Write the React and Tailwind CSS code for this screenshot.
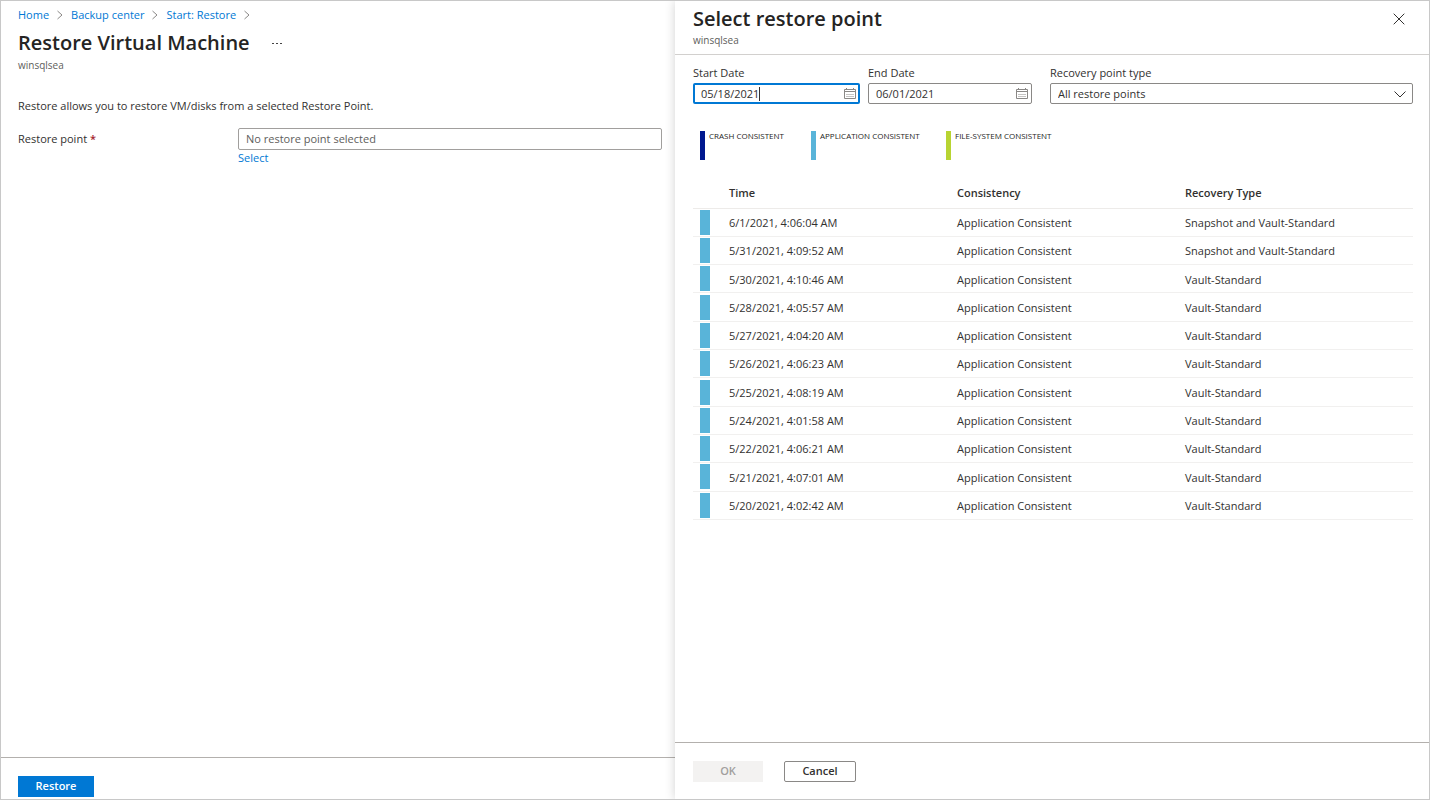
import { useState } from "react";

const LINKS = ["Home", "Backup center", "Start: Restore"];

const LEGEND = [
  { label: "CRASH CONSISTENT", bar: "bg-[#00188f]" },
  { label: "APPLICATION CONSISTENT", bar: "bg-[#59b4d9]" },
  { label: "FILE-SYSTEM CONSISTENT", bar: "bg-[#b8d432]" },
];

const ROWS = [
  { time: "6/1/2021, 4:06:04 AM", type: "Snapshot and Vault-Standard" },
  { time: "5/31/2021, 4:09:52 AM", type: "Snapshot and Vault-Standard" },
  { time: "5/30/2021, 4:10:46 AM", type: "Vault-Standard" },
  { time: "5/28/2021, 4:05:57 AM", type: "Vault-Standard" },
  { time: "5/27/2021, 4:04:20 AM", type: "Vault-Standard" },
  { time: "5/26/2021, 4:06:23 AM", type: "Vault-Standard" },
  { time: "5/25/2021, 4:08:19 AM", type: "Vault-Standard" },
  { time: "5/24/2021, 4:01:58 AM", type: "Vault-Standard" },
  { time: "5/22/2021, 4:06:21 AM", type: "Vault-Standard" },
  { time: "5/21/2021, 4:07:01 AM", type: "Vault-Standard" },
  { time: "5/20/2021, 4:02:42 AM", type: "Vault-Standard" },
];

function Chevron() {
  return (
    <svg viewBox="0 0 6 10" className="h-[10px] w-[6px]" fill="none" stroke="#8a8886" strokeWidth="1" aria-hidden="true">
      <path d="M0.5 1 5 5 0.5 9" />
    </svg>
  );
}

function CalendarIcon() {
  return (
    <svg viewBox="0 0 12 12" className="pointer-events-none absolute top-[5px] right-1 h-3 w-3" fill="none" stroke="#8a8886" strokeWidth="1" aria-hidden="true">
      <path d="M0.5 1.5h11v9h-11zM0.5 3.5h11M2.5 0v2M9.5 0v2" />
      <path d="M2.5 6.5h7M2.5 8.5h7" strokeDasharray="1 1" />
    </svg>
  );
}

function DateField({ id, label, value, onChange, active }) {
  return (
    <div className={active ? "w-[167px]" : "w-[164px]"}>
      <label htmlFor={id} className="block h-[18px] leading-4">
        {label}
      </label>
      <div className="relative">
        <input
          id={id}
          type="text"
          value={value}
          onChange={(e) => onChange(e.target.value)}
          className={`block h-[21px] w-full rounded-[2px] pr-6 caret-transparent outline-none ${
            active ? "border-2 border-[#0078d4] pl-[6px]" : "border border-[#8a8886] pl-[7px]"
          }`}
        />
        {active && <span className="absolute top-1 left-[66px] h-[14px] w-px bg-[#323130]" />}
        <CalendarIcon />
      </div>
    </div>
  );
}

function RestorePane() {
  return (
    <main className="flex min-w-0 flex-1 flex-col">
      <div className="flex-1 pr-[13px] pl-[17px]">
        <nav aria-label="Breadcrumb" className="flex h-7 items-center gap-2 text-[#0078d4]">
          {LINKS.map((link) => (
            <span key={link} className="flex items-center gap-2">
              <a href="#" className="hover:underline">
                {link}
              </a>
              <Chevron />
            </span>
          ))}
        </nav>
        <div className="flex h-7 items-center gap-[22px]">
          <h1 className="text-[20px] leading-7 font-semibold text-[#252423]">Restore Virtual Machine</h1>
          <button type="button" aria-label="More actions" className="flex gap-[2px]">
            <span className="h-px w-[2px] bg-[#444]" />
            <span className="h-px w-[2px] bg-[#444]" />
            <span className="h-px w-[2px] bg-[#444]" />
          </button>
        </div>
        <p className="text-[10px] leading-4 text-[#605e5c]">winsqlsea</p>

        <p className="mt-[25px] leading-4">Restore allows you to restore VM/disks from a selected Restore Point.</p>

        <div className="mt-[14px] flex">
          <label htmlFor="restore-point" className="w-[220px] shrink-0 leading-[22px]">
            Restore point <span className="font-semibold text-[#a4262c]">*</span>
          </label>
          <div className="flex-1">
            <input
              id="restore-point"
              type="text"
              readOnly
              value="No restore point selected"
              className="block h-[22px] w-full rounded-[2px] border border-[#a19f9d] px-[7px] pb-px text-[#605e5c] outline-none"
            />
            <a href="#" className="block leading-4 text-[#0078d4] hover:underline">
              Select
            </a>
          </div>
        </div>
      </div>

      <footer className="h-[42px] border-t border-[#b3b0ad] pt-[18px] pl-[17px]">
        <button type="button" className="block h-[21px] w-[76px] bg-[#0078d4] font-semibold text-white">
          Restore
        </button>
      </footer>
    </main>
  );
}

function RestorePointPanel() {
  const [start, setStart] = useState("05/18/2021");
  const [end, setEnd] = useState("06/01/2021");

  return (
    <aside className="flex w-[754px] shrink-0 flex-col bg-white shadow-[0_0_10px_rgba(0,0,0,0.18)]">
      <header className="flex h-[54px] items-start justify-between border-b border-[#d2d0ce] pr-6 pl-[18px]">
        <div>
          <h2 className="pt-1 text-[20px] leading-7 font-semibold text-[#252423]">Select restore point</h2>
          <p className="text-[10px] leading-[14px] text-[#605e5c]">winsqlsea</p>
        </div>
        <button type="button" aria-label="Close" className="pt-3">
          <svg viewBox="0 0 12 12" className="h-3 w-3" fill="none" stroke="#323130" strokeWidth="1">
            <path d="M0.7 0.7 11.3 11.3M11.3 0.7 0.7 11.3" />
          </svg>
        </button>
      </header>

      <div className="flex-1 pt-[10px] pr-4 pl-[18px]">
        <div className="flex gap-[18px]">
          <div className="flex gap-2">
            <DateField id="start-date" label="Start Date" value={start} onChange={setStart} active />
            <DateField id="end-date" label="End Date" value={end} onChange={setEnd} />
          </div>
          <div className="flex-1">
            <label htmlFor="point-type" className="block h-[18px] leading-4">
              Recovery point type
            </label>
            <div className="relative">
              <select
                id="point-type"
                className="block h-[21px] w-full appearance-none rounded-[2px] border border-[#8a8886] bg-white pt-px pl-[7px] outline-none"
              >
                <option>All restore points</option>
                <option>Crash Consistent</option>
                <option>Application Consistent</option>
                <option>File-system Consistent</option>
              </select>
              <svg
                viewBox="0 0 12 7"
                className="pointer-events-none absolute top-2 right-[7px] h-[7px] w-3"
                fill="none"
                stroke="#323130"
                strokeWidth="1"
                aria-hidden="true"
              >
                <path d="M0.5 0.5 6 6 11.5 0.5" />
              </svg>
            </div>
          </div>
        </div>

        <ul className="mt-[27px] grid grid-cols-[111px_135px_auto] pl-[7px] text-[8px] leading-[10px] font-medium text-[#252423]">
          {LEGEND.map((item) => (
            <li key={item.label} className="flex gap-1 whitespace-nowrap">
              <span className={`h-[29px] w-[5px] ${item.bar}`} />
              {item.label}
            </li>
          ))}
        </ul>

        <table className="mt-4 h-[344px] w-full table-fixed border-collapse text-left">
          <thead>
            <tr className="h-8 border-b border-[#edebe9]">
              <td className="w-9" />
              <th className="pt-[2px] font-semibold">Time</th>
              <th className="pt-[2px] font-semibold">Consistency</th>
              <th className="pt-[2px] font-semibold">Recovery Type</th>
            </tr>
          </thead>
          <tbody>
            {ROWS.map((row) => (
              <tr key={row.time} className="h-7 border-b border-[#f1f0ef]">
                <td className="pl-[7px]">
                  <div className="h-[25px] w-[10px] bg-[#59b4d9]" />
                </td>
                <td className="pt-[2px]">{row.time}</td>
                <td className="pt-[2px]">Application Consistent</td>
                <td className="pt-[2px]">{row.type}</td>
              </tr>
            ))}
          </tbody>
        </table>
      </div>

      <footer className="flex h-[57px] gap-[21px] border-t border-[#b3b0ad] pt-[18px] pl-[18px]">
        <button type="button" disabled className="h-[21px] w-[70px] bg-[#f3f2f1] font-semibold text-[#a19f9d]">
          OK
        </button>
        <button type="button" className="h-[21px] w-[72px] rounded-[2px] border border-[#8a8886] font-semibold">
          Cancel
        </button>
      </footer>
    </aside>
  );
}

export default function App() {
  return (
    <div className="flex min-h-screen overflow-hidden border border-[#c8c8c8] bg-white font-['Open_Sans',sans-serif] text-[11px] text-[#323130]">
      <RestorePane />
      <RestorePointPanel />
    </div>
  );
}
